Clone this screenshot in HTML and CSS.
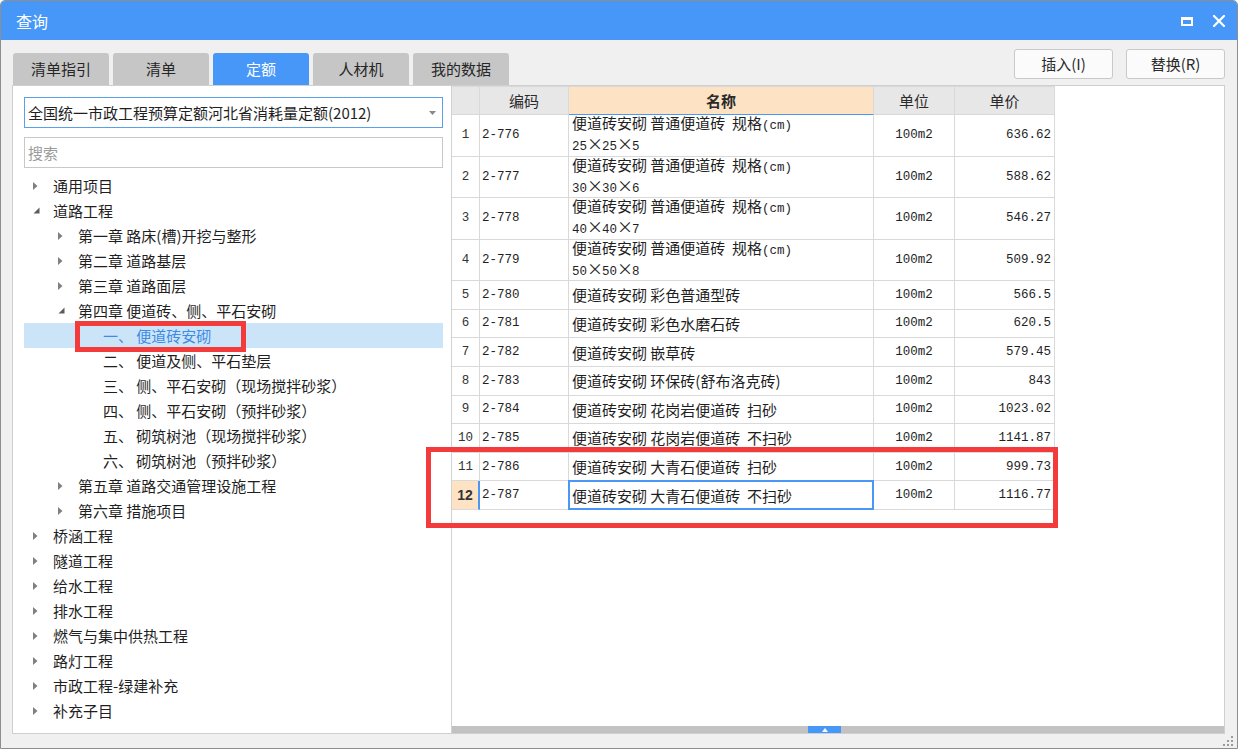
FILE: index.html
```html
<!DOCTYPE html>
<html lang="zh-CN">
<head>
<meta charset="utf-8">
<title>查询</title>
<link rel="stylesheet" href="styles.css">
</head>
<body>
<div class="window">
  <div class="titlebar">
    <span class="title">查询</span>
    <div class="controls">
      <svg class="ctl-max" width="12" height="9" viewBox="0 0 12 9"><path d="M0 0H12V9H0Z M2 3V7H10V3Z" fill="#fff" fill-rule="evenodd"/></svg>
      <svg class="ctl-close" width="12" height="12" viewBox="0 0 12 12"><path d="M1 1L11 11M11 1L1 11" stroke="#fff" stroke-width="2.2" stroke-linecap="square"/></svg>
    </div>
  </div>
  <div class="body">
    <div class="toolbar">
      <div class="tabs">
        <div class="tab">清单指引</div>
        <div class="tab">清单</div>
        <div class="tab active">定额</div>
        <div class="tab">人材机</div>
        <div class="tab">我的数据</div>
      </div>
      <div class="buttons">
        <button class="btn">插入(I)</button>
        <button class="btn">替换(R)</button>
      </div>
    </div>
    <div class="main">
      <div class="left">
        <div class="combo">
          <span class="combo-text">全国统一市政工程预算定额河北省消耗量定额(2012)</span>
          <svg class="combo-arrow" width="7" height="4" viewBox="0 0 7 4"><path d="M0 0H7L3.5 4Z" fill="#888"/></svg>
        </div>
        <div class="search">搜索</div>
        <div class="tree">
          <div class="node l0"><span class="arr"><svg width="5" height="8" viewBox="0 0 5 8"><path d="M0 0L4.5 4L0 8Z" fill="#808080"/></svg></span>通用项目</div>
          <div class="node l0"><span class="arr"><svg width="7" height="7" viewBox="0 0 7 7"><path d="M6.5 0.5V6.5H0.5Z" fill="#5c5c5c"/></svg></span>道路工程</div>
          <div class="node l1"><span class="arr"><svg width="5" height="8" viewBox="0 0 5 8"><path d="M0 0L4.5 4L0 8Z" fill="#808080"/></svg></span>第一章 路床(槽)开挖与整形</div>
          <div class="node l1"><span class="arr"><svg width="5" height="8" viewBox="0 0 5 8"><path d="M0 0L4.5 4L0 8Z" fill="#808080"/></svg></span>第二章 道路基层</div>
          <div class="node l1"><span class="arr"><svg width="5" height="8" viewBox="0 0 5 8"><path d="M0 0L4.5 4L0 8Z" fill="#808080"/></svg></span>第三章 道路面层</div>
          <div class="node l1"><span class="arr"><svg width="7" height="7" viewBox="0 0 7 7"><path d="M6.5 0.5V6.5H0.5Z" fill="#5c5c5c"/></svg></span>第四章 便道砖、侧、平石安砌</div>
          <div class="node l2 sel"><span class="arr"></span>一、 便道砖安砌</div>
          <div class="node l2"><span class="arr"></span>二、 便道及侧、平石垫层</div>
          <div class="node l2"><span class="arr"></span>三、 侧、平石安砌（现场搅拌砂浆）</div>
          <div class="node l2"><span class="arr"></span>四、 侧、平石安砌（预拌砂浆）</div>
          <div class="node l2"><span class="arr"></span>五、 砌筑树池（现场搅拌砂浆）</div>
          <div class="node l2"><span class="arr"></span>六、 砌筑树池（预拌砂浆）</div>
          <div class="node l1"><span class="arr"><svg width="5" height="8" viewBox="0 0 5 8"><path d="M0 0L4.5 4L0 8Z" fill="#808080"/></svg></span>第五章 道路交通管理设施工程</div>
          <div class="node l1"><span class="arr"><svg width="5" height="8" viewBox="0 0 5 8"><path d="M0 0L4.5 4L0 8Z" fill="#808080"/></svg></span>第六章 措施项目</div>
          <div class="node l0"><span class="arr"><svg width="5" height="8" viewBox="0 0 5 8"><path d="M0 0L4.5 4L0 8Z" fill="#808080"/></svg></span>桥涵工程</div>
          <div class="node l0"><span class="arr"><svg width="5" height="8" viewBox="0 0 5 8"><path d="M0 0L4.5 4L0 8Z" fill="#808080"/></svg></span>隧道工程</div>
          <div class="node l0"><span class="arr"><svg width="5" height="8" viewBox="0 0 5 8"><path d="M0 0L4.5 4L0 8Z" fill="#808080"/></svg></span>给水工程</div>
          <div class="node l0"><span class="arr"><svg width="5" height="8" viewBox="0 0 5 8"><path d="M0 0L4.5 4L0 8Z" fill="#808080"/></svg></span>排水工程</div>
          <div class="node l0"><span class="arr"><svg width="5" height="8" viewBox="0 0 5 8"><path d="M0 0L4.5 4L0 8Z" fill="#808080"/></svg></span>燃气与集中供热工程</div>
          <div class="node l0"><span class="arr"><svg width="5" height="8" viewBox="0 0 5 8"><path d="M0 0L4.5 4L0 8Z" fill="#808080"/></svg></span>路灯工程</div>
          <div class="node l0"><span class="arr"><svg width="5" height="8" viewBox="0 0 5 8"><path d="M0 0L4.5 4L0 8Z" fill="#808080"/></svg></span>市政工程-绿建补充</div>
          <div class="node l0"><span class="arr"><svg width="5" height="8" viewBox="0 0 5 8"><path d="M0 0L4.5 4L0 8Z" fill="#808080"/></svg></span>补充子目</div>
        </div>
      </div>
      <div class="right">
        <div class="gridwrap">
          <div class="grid">
            <div class="c hd rn"></div><div class="c hd">编码</div><div class="c hd nmh">名称</div><div class="c hd">单位</div><div class="c hd">单价</div>

            <div class="c rn">1</div><div class="c code">2-776</div><div class="c name"><div class="ln">便道砖安砌 普通便道砖  规格<span class="m">(cm)</span></div><div class="ln"><span class="m">25</span><span class="x">×</span><span class="m">25</span><span class="x">×</span><span class="m">5</span></div></div><div class="c unit">100m2</div><div class="c price">636.62</div>

            <div class="c rn">2</div><div class="c code">2-777</div><div class="c name"><div class="ln">便道砖安砌 普通便道砖  规格<span class="m">(cm)</span></div><div class="ln"><span class="m">30</span><span class="x">×</span><span class="m">30</span><span class="x">×</span><span class="m">6</span></div></div><div class="c unit">100m2</div><div class="c price">588.62</div>

            <div class="c rn">3</div><div class="c code">2-778</div><div class="c name"><div class="ln">便道砖安砌 普通便道砖  规格<span class="m">(cm)</span></div><div class="ln"><span class="m">40</span><span class="x">×</span><span class="m">40</span><span class="x">×</span><span class="m">7</span></div></div><div class="c unit">100m2</div><div class="c price">546.27</div>

            <div class="c rn">4</div><div class="c code">2-779</div><div class="c name"><div class="ln">便道砖安砌 普通便道砖  规格<span class="m">(cm)</span></div><div class="ln"><span class="m">50</span><span class="x">×</span><span class="m">50</span><span class="x">×</span><span class="m">8</span></div></div><div class="c unit">100m2</div><div class="c price">509.92</div>

            <div class="c rn">5</div><div class="c code">2-780</div><div class="c name">便道砖安砌 彩色普通型砖</div><div class="c unit">100m2</div><div class="c price">566.5</div>

            <div class="c rn">6</div><div class="c code">2-781</div><div class="c name">便道砖安砌 彩色水磨石砖</div><div class="c unit">100m2</div><div class="c price">620.5</div>

            <div class="c rn">7</div><div class="c code">2-782</div><div class="c name">便道砖安砌 嵌草砖</div><div class="c unit">100m2</div><div class="c price">579.45</div>

            <div class="c rn">8</div><div class="c code">2-783</div><div class="c name">便道砖安砌 环保砖(舒布洛克砖)</div><div class="c unit">100m2</div><div class="c price">843</div>

            <div class="c rn">9</div><div class="c code">2-784</div><div class="c name">便道砖安砌 花岗岩便道砖  扫砂</div><div class="c unit">100m2</div><div class="c price">1023.02</div>

            <div class="c rn">10</div><div class="c code">2-785</div><div class="c name">便道砖安砌 花岗岩便道砖  不扫砂</div><div class="c unit">100m2</div><div class="c price">1141.87</div>

            <div class="c rn">11</div><div class="c code">2-786</div><div class="c name">便道砖安砌 大青石便道砖  扫砂</div><div class="c unit">100m2</div><div class="c price">999.73</div>

            <div class="c rn cur">12</div><div class="c code">2-787</div><div class="c name selcell">便道砖安砌 大青石便道砖  不扫砂</div><div class="c unit">100m2</div><div class="c price">1116.77</div>
          </div>
        </div>
        <div class="hscroll">
          <div class="thumb"><svg width="6" height="4" viewBox="0 0 6 4"><path d="M3 0L6 4H0Z" fill="#fff"/></svg></div>
        </div>
      </div>
    </div>
  </div>
  <svg class="grip" width="10" height="10" viewBox="0 0 10 10"><g fill="#9a9a9a"><rect x="8" y="0" width="2" height="2"/><rect x="8" y="4" width="2" height="2"/><rect x="4" y="4" width="2" height="2"/><rect x="8" y="8" width="2" height="2"/><rect x="4" y="8" width="2" height="2"/><rect x="0" y="8" width="2" height="2"/></g></svg>
  <div class="mark mark-tree"></div>
  <div class="mark mark-grid"></div>
</div>
</body>
</html>
```

FILE: styles.css
```css
* { box-sizing: border-box; }
html, body { margin: 0; padding: 0; background: #ffffff; }
body {
  font-family: "Noto Sans CJK SC", "Noto Sans", sans-serif;
  font-size: 15px;
  color: #1f1f1f;
}
.window {
  position: relative;
  width: 1238px;
  height: 749px;
  border: 1px solid #8e8e8e;
  border-radius: 5px 5px 0 0;
  background: #f0f0f0;
  display: flex;
  flex-direction: column;
  overflow: hidden;
}
.titlebar {
  height: 39px;
  flex: 0 0 39px;
  background: #4697f7;
  display: flex;
  align-items: center;
  justify-content: space-between;
  padding: 0 12px 0 15px;
}
.title {
  color: #ffffff;
  font-size: 16px;
  line-height: 20px;
}
.controls {
  display: flex;
  align-items: center;
  gap: 20px;
}
.ctl-max { display: block; margin-top: 1px; }
.ctl-close { display: block; }

.body {
  flex: 1;
  display: flex;
  flex-direction: column;
  padding: 0 12px 14px 11px;
  min-height: 0;
}
.toolbar {
  height: 45px;
  flex: 0 0 45px;
  display: flex;
  justify-content: space-between;
  align-items: flex-end;
}
.tabs {
  display: flex;
  padding-left: 1px;
}
.tab {
  width: 96px;
  height: 32px;
  margin-right: 4px;
  background: #c6c6c6;
  border-radius: 3px 3px 0 0;
  color: #262626;
  display: flex;
  align-items: center;
  justify-content: center;
  font-size: 15px;
  line-height: 20px;
}
.tab.active {
  background: #4697f7;
  color: #ffffff;
}
.buttons {
  align-self: flex-start;
  margin-top: 9px;
  display: flex;
  gap: 13px;
}
.btn {
  width: 99px;
  height: 30px;
  background: #fbfbfb;
  border: 1px solid #c9c9c9;
  border-radius: 3px;
  font-family: "Noto Sans CJK SC", "Noto Sans", sans-serif;
  font-size: 15px;
  color: #2b2b2b;
  padding: 0;
  line-height: 20px;
}

.main {
  flex: 1;
  min-height: 0;
  border: 1px solid #cfcfcf;
  background: #ffffff;
  display: flex;
}
.left {
  width: 439px;
  flex: 0 0 439px;
  border-right: 1px solid #d2d2d2;
  padding: 11px 8px 0 11px;
  overflow: hidden;
}
.combo {
  height: 31px;
  border: 1px solid #5b9fe9;
  display: flex;
  align-items: center;
  justify-content: space-between;
  padding: 0 6px 0 3px;
}
.combo-text {
  font-size: 15px;
  line-height: 20px;
  color: #1f1f1f;
}
.combo-arrow { display: block; }
.search {
  height: 31px;
  margin-top: 9px;
  border: 1px solid #c8c8c8;
  padding: 0 3px;
  color: #9b9b9b;
  font-size: 15px;
  line-height: 29px;
}
.tree {
  margin-top: 5px;
}
.node {
  height: 25px;
  display: flex;
  align-items: center;
  line-height: 25px;
  font-size: 15px;
  color: #1f1f1f;
  white-space: pre;
}
.node.l0 { padding-left: 9px; }
.node.l1 { padding-left: 34px; }
.node.l2 { padding-left: 59px; }
.arr {
  width: 20px;
  flex: 0 0 20px;
  display: flex;
  align-items: center;
}
.arr svg { display: block; }
.node.sel {
  background: #cce4f7;
  color: #3c8ce6;
}

.right {
  flex: 1;
  min-width: 0;
  display: flex;
  flex-direction: column;
}
.gridwrap {
  flex: 1;
  min-height: 0;
  overflow: hidden;
}
.grid {
  display: grid;
  grid-template-columns: 28px 89px 305px 81px 100px;
  grid-template-rows: 29px repeat(4, 41.5px) repeat(8, 28.625px);
  width: 603px;
}
.c {
  border-right: 1px solid #d9d9d9;
  border-bottom: 1px solid #d9d9d9;
  display: flex;
  align-items: center;
  white-space: pre;
  color: #1f1f1f;
}
.c.hd {
  border-top: 1px solid #d9d9d9;
  background: #e7e7e7;
  justify-content: center;
  font-size: 15px;
  line-height: 20px;
  color: #2b2b2b;
}
.c.hd.nmh {
  background: #fde3c3;
  font-weight: bold;
  border-bottom-color: #4a97f5;
}
.c.rn {
  justify-content: center;
  font-family: "Liberation Mono", monospace;
  font-size: 12.5px;
  color: #333333;
}
.c.rn.hd { background: #e7e7e7; }
.c.rn.cur {
  background: #fde3c3;
  font-weight: bold;
  font-family: "Liberation Sans", sans-serif;
  font-size: 14px;
  border-right: 2px solid #4a97f5;
}
.c.code {
  padding-left: 2px;
  font-family: "Liberation Mono", monospace;
  font-size: 12.5px;
}
.c.name {
  padding-left: 3px;
  flex-direction: column;
  align-items: flex-start;
  justify-content: center;
  font-size: 15px;
  line-height: 17px;
}
.ln { line-height: 17px; }
.m {
  font-family: "Liberation Mono", monospace;
  font-size: 12.5px;
}
.x {
  display: inline-block;
  width: 15px;
  text-align: center;
  font-size: 16px;
}
.c.unit {
  justify-content: center;
  font-family: "Liberation Mono", monospace;
  font-size: 12.5px;
}
.c.price {
  justify-content: flex-end;
  padding-right: 3px;
  font-family: "Liberation Mono", monospace;
  font-size: 12.5px;
}
.c.selcell {
  position: relative;
}
.c.selcell::after {
  content: "";
  position: absolute;
  left: -1px;
  top: -1px;
  right: -1px;
  bottom: -1px;
  border: 2px solid #4a97f5;
}
.hscroll {
  height: 7px;
  flex: 0 0 7px;
  background: #c2c2c2;
}
.thumb {
  margin-left: 356px;
  width: 33px;
  height: 7px;
  background: #4697f7;
  display: flex;
  align-items: center;
  justify-content: center;
}
.thumb svg { display: block; }

.grip {
  position: absolute;
  right: 4px;
  bottom: 2px;
}
.mark {
  position: absolute;
  border: 5px solid #f43b3b;
}
.mark-tree {
  left: 74px;
  top: 320px;
  width: 171px;
  height: 31px;
}
.mark-grid {
  left: 425px;
  top: 446px;
  width: 632px;
  height: 81px;
}
```
